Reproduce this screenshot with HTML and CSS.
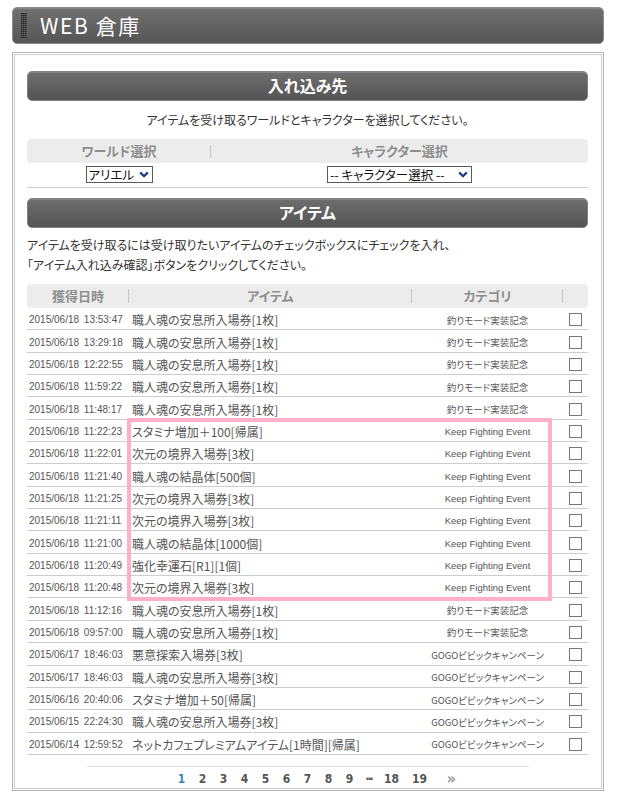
FILE: index.html
```html
<!DOCTYPE html>
<html lang="ja">
<head>
<meta charset="utf-8">
<title>WEB 倉庫</title>
<link rel="stylesheet" href="styles.css">
</head>
<body>
<div class="page">
  <header class="title">
    <span class="title-grip"></span>
    <h1>WEB 倉庫</h1>
  </header>

  <main class="content">
    <h2 class="section-head">入れ込み先</h2>
    <p class="desc">アイテムを受け取るワールドとキャラクターを選択してください。</p>

    <div class="sel-table">
      <div class="sel-head">
        <div class="sel-col sel-col-first">ワールド選択</div>
        <div class="sel-col">キャラクター選択</div>
      </div>
      <div class="sel-body">
        <div class="sel-cell"><span class="select select-world">アリエル<svg class="chev" viewBox="0 0 10 7"><path d="M1.2 1.4 L5 5.2 L8.8 1.4" fill="none" stroke="#1d3a8a" stroke-width="2.2"/></svg></span></div>
        <div class="sel-cell"><span class="select select-char">-- キャラクター選択 --<svg class="chev" viewBox="0 0 10 7"><path d="M1.2 1.4 L5 5.2 L8.8 1.4" fill="none" stroke="#1d3a8a" stroke-width="2.2"/></svg></span></div>
      </div>
    </div>

    <h2 class="section-head section-head-items">アイテム</h2>
    <p class="note">アイテムを受け取るには受け取りたいアイテムのチェックボックスにチェックを入れ、<br>「アイテム入れ込み確認」ボタンをクリックしてください。</p>

    <div class="items">
      <div class="items-head">
        <div class="ih ih-div">獲得日時</div>
        <div class="ih ih-div">アイテム</div>
        <div class="ih ih-div">カテゴリ</div>
        <div class="ih ih-div"></div>
      </div>
      <div class="items-body">
        <div class="row"><span class="c-date">2015/06/18 13:53:47</span><span class="c-item">職人魂の安息所入場券[1枚]</span><span class="c-cat">釣りモード実装記念</span><span class="c-chk"><input type="checkbox"></span></div>
        <div class="row"><span class="c-date">2015/06/18 13:29:18</span><span class="c-item">職人魂の安息所入場券[1枚]</span><span class="c-cat">釣りモード実装記念</span><span class="c-chk"><input type="checkbox"></span></div>
        <div class="row"><span class="c-date">2015/06/18 12:22:55</span><span class="c-item">職人魂の安息所入場券[1枚]</span><span class="c-cat">釣りモード実装記念</span><span class="c-chk"><input type="checkbox"></span></div>
        <div class="row"><span class="c-date">2015/06/18 11:59:22</span><span class="c-item">職人魂の安息所入場券[1枚]</span><span class="c-cat">釣りモード実装記念</span><span class="c-chk"><input type="checkbox"></span></div>
        <div class="row"><span class="c-date">2015/06/18 11:48:17</span><span class="c-item">職人魂の安息所入場券[1枚]</span><span class="c-cat">釣りモード実装記念</span><span class="c-chk"><input type="checkbox"></span></div>
        <div class="row"><span class="c-date">2015/06/18 11:22:23</span><span class="c-item">スタミナ増加＋100[帰属]</span><span class="c-cat c-en">Keep Fighting Event</span><span class="c-chk"><input type="checkbox"></span></div>
        <div class="row"><span class="c-date">2015/06/18 11:22:01</span><span class="c-item">次元の境界入場券[3枚]</span><span class="c-cat c-en">Keep Fighting Event</span><span class="c-chk"><input type="checkbox"></span></div>
        <div class="row"><span class="c-date">2015/06/18 11:21:40</span><span class="c-item">職人魂の結晶体[500個]</span><span class="c-cat c-en">Keep Fighting Event</span><span class="c-chk"><input type="checkbox"></span></div>
        <div class="row"><span class="c-date">2015/06/18 11:21:25</span><span class="c-item">次元の境界入場券[3枚]</span><span class="c-cat c-en">Keep Fighting Event</span><span class="c-chk"><input type="checkbox"></span></div>
        <div class="row"><span class="c-date">2015/06/18 11:21:11</span><span class="c-item">次元の境界入場券[3枚]</span><span class="c-cat c-en">Keep Fighting Event</span><span class="c-chk"><input type="checkbox"></span></div>
        <div class="row"><span class="c-date">2015/06/18 11:21:00</span><span class="c-item">職人魂の結晶体[1000個]</span><span class="c-cat c-en">Keep Fighting Event</span><span class="c-chk"><input type="checkbox"></span></div>
        <div class="row"><span class="c-date">2015/06/18 11:20:49</span><span class="c-item">強化幸運石[R1][1個]</span><span class="c-cat c-en">Keep Fighting Event</span><span class="c-chk"><input type="checkbox"></span></div>
        <div class="row"><span class="c-date">2015/06/18 11:20:48</span><span class="c-item">次元の境界入場券[3枚]</span><span class="c-cat c-en">Keep Fighting Event</span><span class="c-chk"><input type="checkbox"></span></div>
        <div class="row"><span class="c-date">2015/06/18 11:12:16</span><span class="c-item">職人魂の安息所入場券[1枚]</span><span class="c-cat">釣りモード実装記念</span><span class="c-chk"><input type="checkbox"></span></div>
        <div class="row"><span class="c-date">2015/06/18 09:57:00</span><span class="c-item">職人魂の安息所入場券[1枚]</span><span class="c-cat">釣りモード実装記念</span><span class="c-chk"><input type="checkbox"></span></div>
        <div class="row"><span class="c-date">2015/06/17 18:46:03</span><span class="c-item">悪意探索入場券[3枚]</span><span class="c-cat">GOGOビビックキャンペーン</span><span class="c-chk"><input type="checkbox"></span></div>
        <div class="row"><span class="c-date">2015/06/17 18:46:03</span><span class="c-item">職人魂の安息所入場券[3枚]</span><span class="c-cat">GOGOビビックキャンペーン</span><span class="c-chk"><input type="checkbox"></span></div>
        <div class="row"><span class="c-date">2015/06/16 20:40:06</span><span class="c-item">スタミナ増加＋50[帰属]</span><span class="c-cat">GOGOビビックキャンペーン</span><span class="c-chk"><input type="checkbox"></span></div>
        <div class="row"><span class="c-date">2015/06/15 22:24:30</span><span class="c-item">職人魂の安息所入場券[3枚]</span><span class="c-cat">GOGOビビックキャンペーン</span><span class="c-chk"><input type="checkbox"></span></div>
        <div class="row"><span class="c-date">2015/06/14 12:59:52</span><span class="c-item">ネットカフェプレミアムアイテム[1時間][帰属]</span><span class="c-cat">GOGOビビックキャンペーン</span><span class="c-chk"><input type="checkbox"></span></div>
      </div>
      <div class="highlight"></div>
    </div>

    <nav class="pager">
      <div class="pager-line"></div>
      <div class="pager-list">
        <a class="pg pg-current">1</a>
        <a class="pg">2</a>
        <a class="pg">3</a>
        <a class="pg">4</a>
        <a class="pg">5</a>
        <a class="pg">6</a>
        <a class="pg">7</a>
        <a class="pg">8</a>
        <a class="pg">9</a>
        <span class="pg pg-dots">···</span>
        <a class="pg pg-18">18</a>
        <a class="pg pg-19">19</a>
        <a class="pg pg-next">»</a>
      </div>
    </nav>
  </main>
</div>
</body>
</html>
```
FILE: styles.css
```css
* { box-sizing: border-box; }

html, body {
  margin: 0;
  background: #fff;
}

body {
  font-family: "Noto Sans CJK JP", "Liberation Sans", sans-serif;
  font-feature-settings: "palt";
  font-size: 12px;
  color: #333;
  overflow: hidden;
}

.page {
  padding: 7px 13px 0 12px;
}

/* Title bar */
.title {
  height: 37px;
  display: flex;
  align-items: center;
  gap: 13px;
  padding-left: 8px;
  border: 1px solid #8c8c8c;
  border-radius: 5px;
  background: linear-gradient(#717171, #555);
  box-shadow: inset 0 1px 0 #848484;
}

.title-grip {
  width: 6px;
  height: 25px;
  background:
    repeating-linear-gradient(90deg, rgba(0,0,0,0.35) 0 1px, transparent 1px 2px),
    repeating-linear-gradient(0deg, #3e3e3e 0 1px, #6a6a6a 1px 2px);
}

.title h1 {
  margin: 0;
  font-size: 21px;
  font-weight: normal;
  letter-spacing: 1.6px;
  color: #fff;
  line-height: 1;
}

/* Content box */
.content {
  margin-top: 8px;
  border: 1px solid #b4b4b4;
  box-shadow: inset 0 0 0 1px #fff, inset 0 0 0 2px #cdcdcd;
  padding: 18px 15px 2px 14px;
}

.section-head {
  margin: 0;
  height: 30px;
  border: 1px solid #808080;
  border-radius: 5px;
  background: linear-gradient(#6e6e6e, #545454);
  box-shadow: inset 0 1px 0 #858585;
  color: #fff;
  font-size: 16px;
  font-weight: bold;
  text-align: center;
  line-height: 27px;
}

.desc {
  margin: 11px 0 0;
  text-align: center;
  line-height: 16px;
  color: #333;
}

.sel-table {
  margin-top: 11px;
  padding-bottom: 4px;
  border-bottom: 1px solid #cfcfcf;
}

.sel-head {
  display: grid;
  grid-template-columns: 184px 1fr;
  height: 24px;
  background: #ececec;
  border-radius: 4px;
}

.sel-col {
  text-align: center;
  line-height: 24px;
  font-size: 13px;
  font-weight: bold;
  color: #8e8e8e;
}

.sel-col-first {
  background: linear-gradient(#c8c8c8, #c8c8c8) right center / 1px 13px no-repeat;
}

.sel-body {
  display: grid;
  grid-template-columns: 184px 1fr;
  padding-top: 3px;
}

.sel-cell {
  display: flex;
  justify-content: center;
}

.select {
  display: inline-flex;
  align-items: center;
  justify-content: space-between;
  height: 17px;
  padding: 0 3px 0 2px;
  border: 1px solid #5a5a5a;
  background: #fff;
  color: #111;
  font-size: 12.5px;
  line-height: 15px;
}

.select-world { width: 67px; }
.select-char { width: 145px; }

.chev {
  width: 10px;
  height: 7px;
  flex: none;
}

.section-head-items {
  margin-top: 10px;
}

.note {
  margin: 7px 0 0;
  line-height: 20px;
  color: #333;
}

/* Items table */
.items {
  position: relative;
  margin-top: 9px;
}

.items-head {
  display: grid;
  grid-template-columns: 102px 283px 151px 1fr;
  height: 24px;
  background: #ececec;
  border-radius: 4px;
}

.ih {
  text-align: center;
  line-height: 24px;
  font-size: 13px;
  font-weight: bold;
  color: #8e8e8e;
}

.ih-div {
  background: linear-gradient(#c8c8c8, #c8c8c8) right center / 1px 14px no-repeat;
}

.ih-div:last-child {
  background: none;
}

.row {
  display: grid;
  grid-template-columns: 102px 283px 151px 1fr;
  align-items: center;
  height: 22.35px;
  border-bottom: 1px solid #cdcdcd;
  padding-top: 2px;
  color: #555;
}

.c-date {
  font-family: "Liberation Sans", sans-serif;
  font-size: 10px;
  word-spacing: 2px;
  padding-left: 2px;
  color: #555;
}

.c-item {
  padding-left: 3px;
  font-size: 12px;
  white-space: nowrap;
}

.c-cat {
  text-align: center;
  font-size: 9.5px;
  color: #555;
  white-space: nowrap;
}

.c-en {
  font-family: "Liberation Sans", sans-serif;
  font-size: 9.5px;
}

.c-chk {
  display: flex;
  justify-content: center;
}

.c-chk input {
  appearance: none;
  -webkit-appearance: none;
  margin: 0;
  width: 13px;
  height: 13px;
  border: 1px solid #777;
  background: #fff;
  border-radius: 0;
}

.highlight {
  position: absolute;
  left: 100px;
  top: 134px;
  width: 425px;
  height: 183px;
  border: 4px solid #ffafca;
  pointer-events: none;
}

/* Pager */
.pager {
  margin-top: 11px;
}

.pager-line {
  width: 442px;
  margin: 0 auto;
  border-top: 1px solid #dcdcdc;
}

.pager-list {
  display: flex;
  justify-content: center;
  padding: 4px 0 0 26px;
  height: 21px;
  font-family: "DejaVu Sans Condensed", "DejaVu Sans", sans-serif;
  font-weight: bold;
  font-size: 12px;
  line-height: 16px;
}

.pg {
  width: 21px;
  text-align: center;
  color: #555;
  text-decoration: none;
}

.pg-current { color: #3a86b4; }
.pg-dots { width: 17px; font-size: 12px; letter-spacing: -2px; color: #555; }
.pg-18 { width: 29px; }
.pg-19 { width: 27px; }
.pg-next { width: 37px; font-size: 16px; color: #9a9a9a; }
```
